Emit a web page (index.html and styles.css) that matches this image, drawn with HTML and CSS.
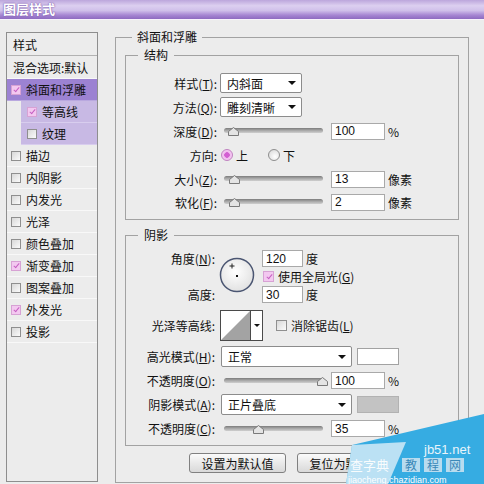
FILE: index.html
```html
<!DOCTYPE html>
<html lang="zh-CN">
<head>
<meta charset="utf-8">
<title>图层样式</title>
<link rel="stylesheet" href="styles.css">
</head>
<body>
<div class="titlebar">图层样式</div>
<div class="dialog">
  <ul class="styles-list">
    <li class="row head">样式</li>
    <li class="row blend">混合选项:默认</li>
    <li class="row sel"><span class="cb on"></span>斜面和浮雕</li>
    <li class="row sub"><span class="cb on"></span>等高线</li>
    <li class="row sub"><span class="cb"></span>纹理</li>
    <li class="row"><span class="cb"></span>描边</li>
    <li class="row"><span class="cb"></span>内阴影</li>
    <li class="row"><span class="cb"></span>内发光</li>
    <li class="row"><span class="cb"></span>光泽</li>
    <li class="row"><span class="cb"></span>颜色叠加</li>
    <li class="row"><span class="cb on"></span>渐变叠加</li>
    <li class="row"><span class="cb"></span>图案叠加</li>
    <li class="row"><span class="cb on"></span>外发光</li>
    <li class="row"><span class="cb"></span>投影</li>
  </ul>

  <div class="group outer">
    <span class="legend l-outer">斜面和浮雕</span>

    <div class="group struct">
      <span class="legend l-inner">结构</span>
      <div class="frow">
        <span class="lbl">样式(<u>T</u>):</span>
        <div class="select s-short"><span>内斜面</span><i class="arrow"></i></div>
      </div>
      <div class="frow">
        <span class="lbl">方法(<u>Q</u>):</span>
        <div class="select s-short"><span>雕刻清晰</span><i class="arrow"></i></div>
      </div>
      <div class="frow">
        <span class="lbl">深度(<u>D</u>):</span>
        <div class="slider"><div class="track"></div><svg class="thumb" style="left:4px" width="11" height="9" viewBox="0 0 11 9"><polygon points="0.5,8.5 0.5,4.5 5.5,0.5 10.5,4.5 10.5,8.5" fill="#e4e4e4" stroke="#7a7a7a"/></svg></div>
        <input class="num" type="text" value="100" readonly><span class="unit">%</span>
      </div>
      <div class="frow">
        <span class="lbl">方向:</span>
        <span class="radio on"></span><span class="rtext">上</span>
        <span class="radio r2"></span><span class="rtext">下</span>
      </div>
      <div class="frow">
        <span class="lbl">大小(<u>Z</u>):</span>
        <div class="slider"><div class="track"></div><svg class="thumb" style="left:5px" width="11" height="9" viewBox="0 0 11 9"><polygon points="0.5,8.5 0.5,4.5 5.5,0.5 10.5,4.5 10.5,8.5" fill="#e4e4e4" stroke="#7a7a7a"/></svg></div>
        <input class="num" type="text" value="13" readonly><span class="unit">像素</span>
      </div>
      <div class="frow last">
        <span class="lbl">软化(<u>F</u>):</span>
        <div class="slider"><div class="track"></div><svg class="thumb" style="left:5px" width="11" height="9" viewBox="0 0 11 9"><polygon points="0.5,8.5 0.5,4.5 5.5,0.5 10.5,4.5 10.5,8.5" fill="#e4e4e4" stroke="#7a7a7a"/></svg></div>
        <input class="num" type="text" value="2" readonly><span class="unit">像素</span>
      </div>
    </div>

    <div class="group shadow">
      <span class="legend l-inner">阴影</span>
      <div class="angle">
        <span class="lbl lbl-s a1">角度(<u>N</u>):</span>
        <svg class="dial" width="36" height="36" viewBox="0 0 36 36">
          <defs>
            <radialGradient id="dg" cx="45%" cy="40%" r="60%">
              <stop offset="0" stop-color="#ffffff"/>
              <stop offset="1" stop-color="#e2e2e2"/>
            </radialGradient>
          </defs>
          <circle cx="18" cy="18" r="16.5" fill="url(#dg)" stroke="#4b5672" stroke-width="1.5"/>
          <path d="M13 6.5v5M10.5 9h5" stroke="#222" stroke-width="1"/>
          <rect x="17" y="18" width="2" height="2" fill="#111"/>
        </svg>
        <span class="ctl a1"><input class="num short" type="text" value="120" readonly><span class="unit">度</span></span>
        <span class="ctl a2"><span class="cb cb-f on"></span>使用全局光(<u>G</u>)</span>
        <span class="lbl lbl-s a3">高度:</span>
        <span class="ctl a3"><input class="num short" type="text" value="30" readonly><span class="unit">度</span></span>
      </div>
      <div class="frow tall">
        <span class="lbl lbl-s">光泽等高线:</span>
        <div class="contour">
          <svg width="29" height="29" viewBox="0 0 29 29"><rect width="29" height="29" fill="#fff"/><polygon points="0,29 29,0 29,29" fill="#a3a3a3"/></svg>
          <span class="c-drop"><i class="arrow"></i></span>
        </div>
        <span class="cb cb-f anti"></span><span>消除锯齿(<u>L</u>)</span>
      </div>
      <div class="frow mode">
        <span class="lbl lbl-s">高光模式(<u>H</u>):</span>
        <div class="select s-long"><span>正常</span><i class="arrow"></i></div>
        <span class="swatch white"></span>
      </div>
      <div class="frow op">
        <span class="lbl lbl-s">不透明度(<u>O</u>):</span>
        <div class="slider"><div class="track"></div><svg class="thumb" style="left:93px" width="11" height="9" viewBox="0 0 11 9"><polygon points="0.5,8.5 0.5,4.5 5.5,0.5 10.5,4.5 10.5,8.5" fill="#e4e4e4" stroke="#7a7a7a"/></svg></div>
        <input class="num" type="text" value="100" readonly><span class="unit">%</span>
      </div>
      <div class="frow mode">
        <span class="lbl lbl-s">阴影模式(<u>A</u>):</span>
        <div class="select s-long"><span>正片叠底</span><i class="arrow"></i></div>
        <span class="swatch gray"></span>
      </div>
      <div class="frow op">
        <span class="lbl lbl-s">不透明度(<u>C</u>):</span>
        <div class="slider"><div class="track"></div><svg class="thumb" style="left:29px" width="11" height="9" viewBox="0 0 11 9"><polygon points="0.5,8.5 0.5,4.5 5.5,0.5 10.5,4.5 10.5,8.5" fill="#e4e4e4" stroke="#7a7a7a"/></svg></div>
        <input class="num" type="text" value="35" readonly><span class="unit">%</span>
      </div>
    </div>

    <div class="buttons">
      <button class="btn" type="button">设置为默认值</button>
      <button class="btn" type="button">复位为默认值</button>
    </div>
  </div>
</div>

<svg class="watermark" width="140" height="72" viewBox="0 0 140 72">
  <polygon points="140,2 140,72 2,72 8,33" fill="#36ace2"/>
  <polygon points="8,33 62,30 44,72 2,72" fill="#e8f3fa" opacity="0.75"/>
  <text x="80" y="42" fill="#e9f4fb" font-family="Liberation Sans, sans-serif" font-size="13">jb51.net</text>
  <rect x="58" y="46" width="18" height="14" fill="#d9e9f3" opacity="0.8"/>
  <rect x="80" y="46" width="18" height="14" fill="#d9e9f3" opacity="0.8"/>
  <rect x="102" y="46" width="18" height="14" fill="#d9e9f3" opacity="0.8"/>
  <text x="61" y="58" fill="#3a88b8" font-family="Noto Sans CJK SC, sans-serif" font-size="12" letter-spacing="10">教程网</text>
  <text x="6" y="58" fill="#ffffff" opacity="0.9" font-family="Noto Sans CJK SC, sans-serif" font-size="13">查字典</text>
  <text x="4" y="71" fill="#ffffff" font-family="Liberation Sans, sans-serif" font-size="9">jiaocheng.chazidian.com</text>
</svg>
</body>
</html>
```

FILE: styles.css
```css
html, body {
  margin: 0;
  padding: 0;
}

body {
  width: 484px;
  height: 484px;
  overflow: hidden;
  position: relative;
  background: #ececec;
  font-family: "Noto Sans CJK SC", "Noto Sans", sans-serif;
  font-size: 12px;
  color: #111;
}

u {
  text-decoration: underline;
  text-underline-offset: 1px;
}

.titlebar {
  height: 19px;
  line-height: 18px;
  padding-left: 3px;
  background: linear-gradient(#bca6dc 0%, #dccff0 30%, #d0c0ea 55%, #a585d2 80%, #8d6ac0 100%);
  border-bottom: 1px solid #f6f2fb;
  color: #fff;
  font-weight: bold;
  font-size: 13px;
  text-shadow: 0 0 2px #7a58ad, 0 0 1px #7a58ad;
}

.dialog {
  display: flex;
  align-items: flex-start;
  padding: 12px 0 0 6px;
}

/* left list */
.styles-list {
  list-style: none;
  margin: 0;
  padding: 0;
  width: 92px;
  height: 450px;
  box-sizing: border-box;
  border: 1px solid #8e8e8e;
  flex: none;
}

.row {
  height: 22px;
  box-sizing: border-box;
  border-bottom: 1px solid #f8f8f8;
  display: flex;
  align-items: center;
  padding-left: 4px;
  white-space: nowrap;
}

.row.head {
  height: 23px;
  padding-left: 6px;
  border-bottom: 1px solid #b2b2b2;
}

.row.blend {
  height: 23px;
  padding-left: 6px;
}

.row.sel {
  background: #9c82d2;
  border-bottom-color: #b9a8df;
}

.row.sub {
  margin-left: 14px;
  padding-left: 6px;
  background: #c8b9e4;
  border-bottom-color: #d8cdee;
}

.cb {
  width: 10px;
  height: 10px;
  box-sizing: border-box;
  border: 1px solid #8f8f8f;
  background: linear-gradient(135deg, #d8d8d8, #fbfbfb);
  margin-right: 5px;
  flex: none;
  position: relative;
}

.cb.on {
  border-color: #d7a2d4;
  background: #f3c8f0;
}

.cb.on::after {
  content: "";
  position: absolute;
  left: 3px;
  top: 0px;
  width: 2px;
  height: 5px;
  border: solid #c65fc2;
  border-width: 0 1.5px 1.5px 0;
  transform: rotate(40deg);
}

.cb-f {
  width: 11px;
  height: 11px;
  margin-right: 4px;
}

.cb-f.on::after {
  left: 3.5px;
  top: 0.5px;
}

/* group boxes */
.group {
  position: relative;
  border: 1px solid #a2a2a2;
  box-sizing: border-box;
}

.legend {
  position: absolute;
  top: -8px;
  line-height: 14px;
  background: #ececec;
  padding: 0 5px;
  white-space: nowrap;
}

.l-outer {
  left: 16px;
}

.l-inner {
  left: 12px;
  padding: 0 6px;
}

.outer {
  margin: 5px 0 0 17px;
  width: 354px;
  height: 446px;
  padding: 17px 9px 0 9px;
}

.struct {
  height: 165px;
  padding-top: 15px;
}

.shadow {
  margin-top: 15px;
  height: 211px;
  padding-top: 14px;
  display: flex;
  flex-direction: column;
  gap: 5px;
}

.frow {
  display: flex;
  align-items: center;
  height: 24px;
  white-space: nowrap;
}

.frow.last {
  height: 22px;
}

.lbl {
  width: 94px;
  box-sizing: border-box;
  padding-right: 3px;
  text-align: right;
  flex: none;
  white-space: nowrap;
}

.lbl-s {
  padding-right: 5px;
}

/* select */
.select {
  height: 20px;
  box-sizing: border-box;
  border: 1px solid #8c8c8c;
  border-radius: 2px;
  background: #fff;
  display: flex;
  align-items: center;
  justify-content: space-between;
  padding: 0 5px 0 6px;
  flex: none;
}

.s-short {
  width: 82px;
}

.s-long {
  width: 131px;
  height: 21px;
  margin-left: 1px;
}

.arrow {
  display: block;
  width: 0;
  height: 0;
  border-top: 4px solid #111;
  border-left: 4px solid transparent;
  border-right: 4px solid transparent;
}

/* slider */
.slider {
  position: relative;
  width: 111px;
  height: 14px;
  flex: none;
}

.track {
  position: absolute;
  left: 4px;
  top: 4px;
  width: 99px;
  height: 5px;
  border-radius: 3px;
  background: linear-gradient(#7c7c7c, #a9a9a9 50%, #cfcfcf);
}

.thumb {
  position: absolute;
  top: 3px;
  margin-left: 4px;
}

.num {
  width: 54px;
  height: 17px;
  box-sizing: border-box;
  border: 1px solid #a9a9a9;
  background: #fff;
  padding: 0 3px;
  margin: 0;
  font-family: "Liberation Sans", "Noto Sans", sans-serif;
  font-size: 12px;
  color: #111;
  outline: none;
  flex: none;
}

.num.short {
  width: 41px;
}

.unit {
  margin-left: 3px;
}

/* radio */
.radio {
  width: 12px;
  height: 12px;
  box-sizing: border-box;
  border-radius: 50%;
  border: 1px solid #8e8e8e;
  background: radial-gradient(circle at 60% 65%, #ffffff, #d4d4d4);
  flex: none;
  margin-left: 1px;
  margin-right: 3px;
}

.radio.on {
  border-color: #c081c0;
  background: radial-gradient(circle, #d35ed2 0 2.5px, #f1b9ef 3px, #f7d8f5 100%);
}

.radio.r2 {
  margin-left: 20px;
}

/* angle */
.angle {
  display: grid;
  grid-template-columns: 94px 42px 1fr;
  grid-template-rows: 17px 19px 17px;
  height: 55px;
  align-items: center;
  white-space: nowrap;
}

.a1 { grid-row: 1; }
.a2 { grid-row: 2; grid-column: 3; }
.a3 { grid-row: 3; }

.lbl.a1, .lbl.a3 {
  grid-column: 1;
}

.ctl {
  grid-column: 3;
  display: flex;
  align-items: center;
}

.ctl.a2 {
  padding-left: 1px;
}

.dial {
  grid-column: 2;
  grid-row: 1 / 4;
  align-self: start;
  margin-top: 7px;
  margin-left: -1px;
}

/* contour */
.frow.tall {
  height: 31px;
}

.contour {
  display: flex;
  height: 31px;
  box-sizing: border-box;
  border: 1px solid #4a4a4a;
  background: #fff;
  flex: none;
}

.contour svg {
  display: block;
}

.c-drop {
  width: 11px;
  border-left: 1px solid #4a4a4a;
  display: flex;
  align-items: center;
  justify-content: center;
}

.c-drop .arrow {
  border-top-width: 3px;
  border-left-width: 3px;
  border-right-width: 3px;
}

.cb.anti {
  margin-left: 13px;
}

.frow.mode {
  height: 21px;
}

.frow.op {
  height: 17px;
}

.swatch {
  width: 42px;
  height: 17px;
  box-sizing: border-box;
  margin-left: 5px;
  flex: none;
}

.swatch.white {
  background: #fff;
  border: 1px solid #a2a2a2;
}

.swatch.gray {
  background: #c3c3c3;
  border: 1px solid #b2b2b2;
}

/* buttons */
.buttons {
  display: flex;
  justify-content: center;
  gap: 11px;
  margin-top: 7px;
  margin-left: -1px;
}

.btn {
  width: 97px;
  height: 20px;
  box-sizing: border-box;
  border: 1px solid #808080;
  border-radius: 3px;
  background: linear-gradient(#fbfbfb, #e9e9e9 50%, #d9d9d9);
  font-family: "Noto Sans CJK SC", "Noto Sans", sans-serif;
  font-size: 12px;
  color: #111;
  padding: 0;
  line-height: 17px;
}

.watermark {
  position: absolute;
  right: 0;
  bottom: 0;
  display: block;
}
```
